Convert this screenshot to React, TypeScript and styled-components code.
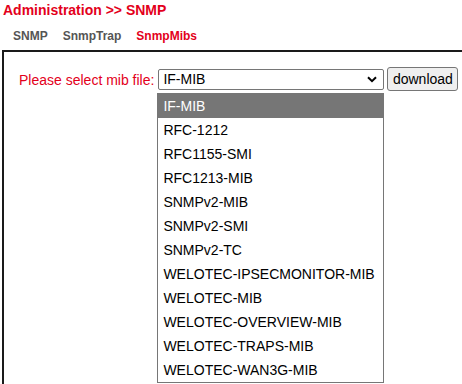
import React from "react";
import styled, { createGlobalStyle } from "styled-components";

const Global = createGlobalStyle`
  html, body { margin: 0; padding: 0; background: #fff; overflow: hidden; }
  body { font-family: "Liberation Sans", Arial, sans-serif; }
`;

const Page = styled.div`
  width: 462px;
  height: 384px;
  overflow: hidden;
`;

const Title = styled.h1`
  margin: 0;
  padding: 2px 0 0 3px;
  height: 20px;
  font-size: 14px;
  font-weight: bold;
  color: #e3001b;
  line-height: 17px;
`;

const Tabs = styled.nav`
  display: flex;
  gap: 15px;
  padding: 7px 0 0 13px;
  height: 21px;
`;

const Tab = styled.span<{ $active?: boolean }>`
  font-size: 12px;
  font-weight: bold;
  line-height: 14px;
  color: ${(p) => (p.$active ? "#e3001b" : "#555555")};
`;

const Panel = styled.section`
  margin-left: 2px;
  width: 520px;
  height: 400px;
  border-top: 2px solid #1a1a1a;
  border-left: 2px solid #1a1a1a;
  padding: 15px 0 0 15px;
  box-sizing: border-box;
`;

const Row = styled.div`
  display: flex;
  align-items: center;
  height: 24px;
`;

const Label = styled.label`
  font-size: 14px;
  color: #e3001b;
  margin-right: 4px;
  line-height: 16px;
  padding-top: 1px;
`;

const SelectWrap = styled.div`
  position: relative;
  width: 226px;
  height: 21px;
`;

const SelectBox = styled.div`
  box-sizing: border-box;
  width: 226px;
  height: 21px;
  border: 1px solid #767676;
  border-radius: 2px;
  display: flex;
  align-items: center;
  justify-content: space-between;
  padding: 0 6px 0 4px;
  font-size: 14px;
  color: #000;
  background: #fff;
`;

const Button = styled.button`
  margin-left: 3px;
  box-sizing: border-box;
  width: 71px;
  height: 24px;
  font-family: "Liberation Sans", Arial, sans-serif;
  font-size: 14px;
  color: #000;
  background: #efefef;
  border: 1px solid #767676;
  border-radius: 3px;
  padding: 0;
`;

const List = styled.ul`
  position: absolute;
  left: -1px;
  top: 24px;
  width: 227px;
  margin: 0;
  padding: 0;
  list-style: none;
  box-sizing: border-box;
  border: 1px solid #767676;
  background: #fff;
`;

const Item = styled.li<{ $selected?: boolean }>`
  height: 24px;
  line-height: 24px;
  padding-left: 5px;
  font-size: 14px;
  color: ${(p) => (p.$selected ? "#fff" : "#000")};
  background: ${(p) => (p.$selected ? "#767676" : "#fff")};
`;

const mibs = [
  "IF-MIB",
  "RFC-1212",
  "RFC1155-SMI",
  "RFC1213-MIB",
  "SNMPv2-MIB",
  "SNMPv2-SMI",
  "SNMPv2-TC",
  "WELOTEC-IPSECMONITOR-MIB",
  "WELOTEC-MIB",
  "WELOTEC-OVERVIEW-MIB",
  "WELOTEC-TRAPS-MIB",
  "WELOTEC-WAN3G-MIB",
];

export default function App() {
  return (
    <Page>
      <Global />
      <Title>Administration &gt;&gt; SNMP</Title>
      <Tabs>
        <Tab>SNMP</Tab>
        <Tab>SnmpTrap</Tab>
        <Tab $active>SnmpMibs</Tab>
      </Tabs>
      <Panel>
        <Row>
          <Label>Please select mib file:</Label>
          <SelectWrap>
            <SelectBox>
              <span>IF-MIB</span>
              <svg width="10" height="7" viewBox="0 0 10 7">
                <path d="M1 1.2 L5 5.2 L9 1.2" fill="none" stroke="#000" strokeWidth="2" />
              </svg>
            </SelectBox>
            <List>
              {mibs.map((m, i) => (
                <Item key={m} $selected={i === 0}>
                  {m}
                </Item>
              ))}
            </List>
          </SelectWrap>
          <Button>download</Button>
        </Row>
      </Panel>
    </Page>
  );
}
